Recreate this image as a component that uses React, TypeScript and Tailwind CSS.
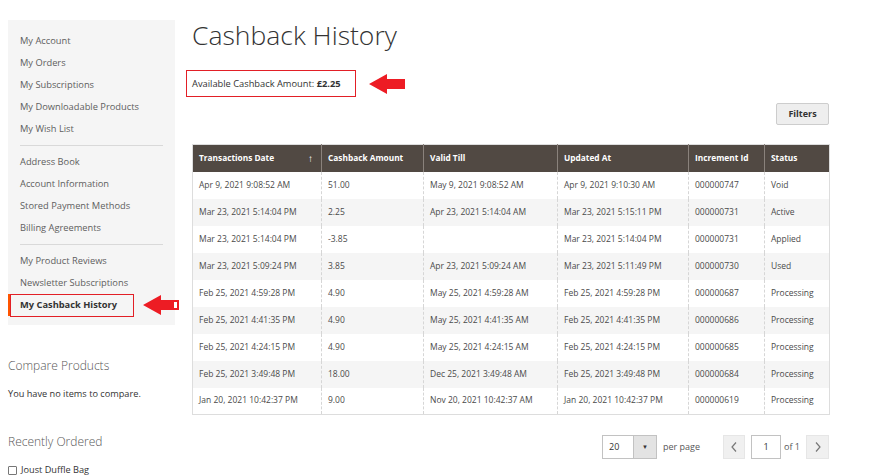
import React from "react";

type Row = {
  date: string;
  amount: string;
  validTill: string;
  updatedAt: string;
  incrementId: string;
  status: string;
};

const rows: Row[] = [
  { date: "Apr 9, 2021 9:08:52 AM", amount: "51.00", validTill: "May 9, 2021 9:08:52 AM", updatedAt: "Apr 9, 2021 9:10:30 AM", incrementId: "000000747", status: "Void" },
  { date: "Mar 23, 2021 5:14:04 PM", amount: "2.25", validTill: "Apr 23, 2021 5:14:04 AM", updatedAt: "Mar 23, 2021 5:15:11 PM", incrementId: "000000731", status: "Active" },
  { date: "Mar 23, 2021 5:14:04 PM", amount: "-3.85", validTill: "", updatedAt: "Mar 23, 2021 5:14:04 PM", incrementId: "000000731", status: "Applied" },
  { date: "Mar 23, 2021 5:09:24 PM", amount: "3.85", validTill: "Apr 23, 2021 5:09:24 AM", updatedAt: "Mar 23, 2021 5:11:49 PM", incrementId: "000000730", status: "Used" },
  { date: "Feb 25, 2021 4:59:28 PM", amount: "4.90", validTill: "May 25, 2021 4:59:28 AM", updatedAt: "Feb 25, 2021 4:59:28 PM", incrementId: "000000687", status: "Processing" },
  { date: "Feb 25, 2021 4:41:35 PM", amount: "4.90", validTill: "May 25, 2021 4:41:35 AM", updatedAt: "Feb 25, 2021 4:41:35 PM", incrementId: "000000686", status: "Processing" },
  { date: "Feb 25, 2021 4:24:15 PM", amount: "4.90", validTill: "May 25, 2021 4:24:15 AM", updatedAt: "Feb 25, 2021 4:24:15 PM", incrementId: "000000685", status: "Processing" },
  { date: "Feb 25, 2021 3:49:48 PM", amount: "18.00", validTill: "Dec 25, 2021 3:49:48 AM", updatedAt: "Feb 25, 2021 3:49:48 PM", incrementId: "000000684", status: "Processing" },
  { date: "Jan 20, 2021 10:42:37 PM", amount: "9.00", validTill: "Nov 20, 2021 10:42:37 AM", updatedAt: "Jan 20, 2021 10:42:37 PM", incrementId: "000000619", status: "Processing" },
];

const navGroups = [
  ["My Account", "My Orders", "My Subscriptions", "My Downloadable Products", "My Wish List"],
  ["Address Book", "Account Information", "Stored Payment Methods", "Billing Agreements"],
];
const lastGroup = ["My Product Reviews", "Newsletter Subscriptions"];

function RedArrow({ hollowTail = false }: { hollowTail?: boolean }) {
  return (
    <svg width="36" height="20" viewBox="0 0 36 20" className="block">
      <polygon points="0,10 18,0 18,5 36,5 36,15 18,15 18,20" fill="#ed1c24" />
      {hollowTail && <rect x="31" y="7" width="3" height="6" fill="#ffffff" />}
    </svg>
  );
}

function NavItem({ label }: { label: string }) {
  return <div className="h-[22px] flex items-center pl-3 text-[9.3px] text-[#5e5e5e]">{label}</div>;
}

function Sidebar() {
  return (
    <aside className="w-[167px] shrink-0 ml-2">
      <nav className="mt-5 bg-[#f5f5f5] pt-[10px] pb-[9px]">
        {navGroups.map((group, gi) => (
          <div key={gi}>
            {group.map((item) => (
              <NavItem key={item} label={item} />
            ))}
            <div className="mx-3 my-[5px] h-px bg-[#d9d9d9]" />
          </div>
        ))}
        {lastGroup.map((item) => (
          <NavItem key={item} label={item} />
        ))}
        <div className="relative h-[22px] flex items-center border-l-[3px] border-[#ff5501] pl-[9px] text-[9.3px] font-bold text-[#333]">
          My Cashback History
          <div className="absolute left-[-1px] top-0 w-[124px] h-[23px] border border-[#e21f26]" />
          <div className="absolute left-[132px] top-[1px]">
            <RedArrow hollowTail />
          </div>
        </div>
      </nav>

      <div className="mt-[31px] text-[12px] font-light text-[#575757] leading-[20px]">Compare Products</div>
      <div className="mt-[11px] text-[9.2px] leading-[14px] text-[#333]">You have no items to compare.</div>
      <div className="mt-[31px] text-[12px] font-light text-[#575757] leading-[20px]">Recently Ordered</div>
      <div className="mt-[11px] flex items-center gap-[4px] text-[9.2px] leading-[14px] text-[#333]">
        <span className="inline-block w-[9px] h-[9px] border border-[#777] rounded-[1px] bg-white" />
        Joust Duffle Bag
      </div>
    </aside>
  );
}

function Pagination() {
  return (
    <div className="mt-[20px] flex items-center justify-end text-[9px] text-[#333]">
      <div className="flex h-[24px] border border-[#c2c2c2]">
        <div className="w-[30px] flex items-center pl-[6px] bg-white">20</div>
        <div className="w-[23px] flex items-center justify-center bg-[#e3e3e3] border-l border-[#c2c2c2] text-[6px] text-[#333]">▼</div>
      </div>
      <span className="ml-[6px] text-[#575757]">per page</span>
      <div className="ml-[23px] w-[22px] h-[24px] flex items-center justify-center bg-[#f0f0f0] border border-[#e6e6e6]">
        <svg width="8" height="12" viewBox="0 0 8 12"><path d="M6 1.5 L2 6 L6 10.5" fill="none" stroke="#777" strokeWidth="1.2" /></svg>
      </div>
      <div className="ml-[6px] w-[30px] h-[24px] flex items-center justify-center border border-[#c2c2c2] bg-white">1</div>
      <span className="ml-[3px] text-[#575757]">of 1</span>
      <div className="ml-[6px] w-[23px] h-[24px] flex items-center justify-center bg-[#f0f0f0] border border-[#e6e6e6]">
        <svg width="8" height="12" viewBox="0 0 8 12"><path d="M2 1.5 L6 6 L2 10.5" fill="none" stroke="#777" strokeWidth="1.2" /></svg>
      </div>
    </div>
  );
}

export default function App() {
  const headers = ["Transactions Date", "Cashback Amount", "Valid Till", "Updated At", "Increment Id", "Status"];
  const widths = ["w-[129px]", "w-[102px]", "w-[134px]", "w-[131px]", "w-[76px]", "w-[65px]"];

  return (
    <div className="w-[890px] h-[476px] overflow-hidden bg-white flex font-['Open_Sans',sans-serif]">
      <Sidebar />

      <main className="ml-[17px] w-[637px] shrink-0">
        <h1 className="mt-[17px] text-[26.5px] leading-[36px] font-light text-[#333]">Cashback History</h1>

        <div className="mt-[17px] flex items-center">
          <div className="-ml-[6px] w-[170px] h-[27px] flex items-center pl-[5px] border border-[#e21f26] text-[9.3px] text-[#333]">
            Available Cashback Amount:&nbsp;<span className="font-bold">£2.25</span>
          </div>
          <div className="ml-[13px]">
            <RedArrow />
          </div>
        </div>

        <div className="mt-[6px] flex justify-end">
          <button
            type="button"
            className="w-[53px] h-[22px] bg-[#eeeeee] border border-[#cdcdcd] rounded-[2px] text-[9px] font-bold text-[#333]"
          >
            Filters
          </button>
        </div>

        <table className="mt-[19px] w-[637px] table-fixed border-collapse border border-[#dddddd] text-[8.5px]">
          <colgroup>
            {widths.map((w, i) => (
              <col key={i} className={w} />
            ))}
          </colgroup>
          <thead>
            <tr className="bg-[#514943] h-[27px]">
              {headers.map((h, i) => (
                <th
                  key={h}
                  className={`text-left font-bold text-white px-[6px] text-[8.3px] ${i > 0 ? "border-l border-[#8a827c]" : ""}`}
                >
                  {i === 0 ? (
                    <div className="flex items-center justify-between">
                      <span>{h}</span>
                      <span className="font-normal text-[10px] leading-none pr-[2px]">↑</span>
                    </div>
                  ) : (
                    h
                  )}
                </th>
              ))}
            </tr>
          </thead>
          <tbody>
            {rows.map((r, ri) => (
              <tr key={ri} className={`h-[27px] ${ri % 2 === 1 ? "bg-[#f5f5f5]" : "bg-white"} text-[#4a4a4a]`}>
                {[r.date, r.amount, r.validTill, r.updatedAt, r.incrementId, r.status].map((c, ci) => (
                  <td
                    key={ci}
                    className={`px-[6px] whitespace-nowrap ${ci > 0 ? "border-l border-dashed border-[#d6d6d6]" : ""}`}
                  >
                    {c}
                  </td>
                ))}
              </tr>
            ))}
          </tbody>
        </table>

        <Pagination />
      </main>
    </div>
  );
}
